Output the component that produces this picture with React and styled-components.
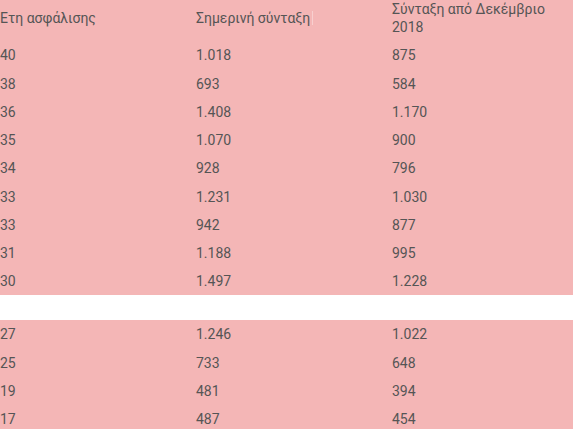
import React from "react";
import styled, { createGlobalStyle } from "styled-components";

const GlobalStyle = createGlobalStyle`
  html, body {
    margin: 0;
    padding: 0;
    background: #ffffff;
  }
  body {
    font-family: Roboto, "Noto Sans", "Liberation Sans", sans-serif;
    overflow: hidden;
  }
`;

const Table = styled.table`
  width: 100%;
  margin-top: -5.125px;
  border-collapse: collapse;
  table-layout: fixed;
  font-size: 14px;
  line-height: 18px;
  color: #555555;
`;

const Col = styled.col`
  width: ${(p) => p.$w};
`;

const Row = styled.tr`
  background: ${(p) => (p.$gap ? "#ffffff" : "#f4b6b6")};
  height: ${(p) => (p.$gap ? "24.75px" : "auto")};
`;

const HeadCell = styled.th`
  padding: 5.125px 12px 5.125px 0;
  text-align: left;
  font-weight: 400;
  vertical-align: middle;
`;

const Cell = styled.td`
  padding: 5.125px 12px 5.125px 0;
  text-align: left;
  vertical-align: middle;
  white-space: nowrap;
`;

const Marker = styled.span`
  display: inline-block;
  width: 1px;
  height: 14px;
  margin-left: 2px;
  vertical-align: -2px;
  background: rgba(255, 255, 255, 0.35);
`;

const upper = [
  ["40", "1.018", "875"],
  ["38", "693", "584"],
  ["36", "1.408", "1.170"],
  ["35", "1.070", "900"],
  ["34", "928", "796"],
  ["33", "1.231", "1.030"],
  ["33", "942", "877"],
  ["31", "1.188", "995"],
  ["30", "1.497", "1.228"],
];

const lower = [
  ["27", "1.246", "1.022"],
  ["25", "733", "648"],
  ["19", "481", "394"],
  ["17", "487", "454"],
  ["15", "420", "380"],
];

const DataRow = ({ r }) => (
  <Row>
    {r.map((v, i) => (
      <Cell key={i}>{v}</Cell>
    ))}
  </Row>
);

export default function App() {
  return (
    <>
      <GlobalStyle />
      <Table>
        <colgroup>
          <Col $w="196px" />
          <Col $w="196px" />
          <Col $w="auto" />
        </colgroup>
        <thead>
          <Row>
            <HeadCell>Ετη ασφάλισης</HeadCell>
            <HeadCell>
              Σημερινή σύνταξη
              <Marker />
            </HeadCell>
            <HeadCell>Σύνταξη από Δεκέμβριο 2018</HeadCell>
          </Row>
        </thead>
        <tbody>
          {upper.map((r, i) => (
            <DataRow key={"u" + i} r={r} />
          ))}
          <Row $gap>
            <td colSpan={3} />
          </Row>
          {lower.map((r, i) => (
            <DataRow key={"l" + i} r={r} />
          ))}
        </tbody>
      </Table>
    </>
  );
}
